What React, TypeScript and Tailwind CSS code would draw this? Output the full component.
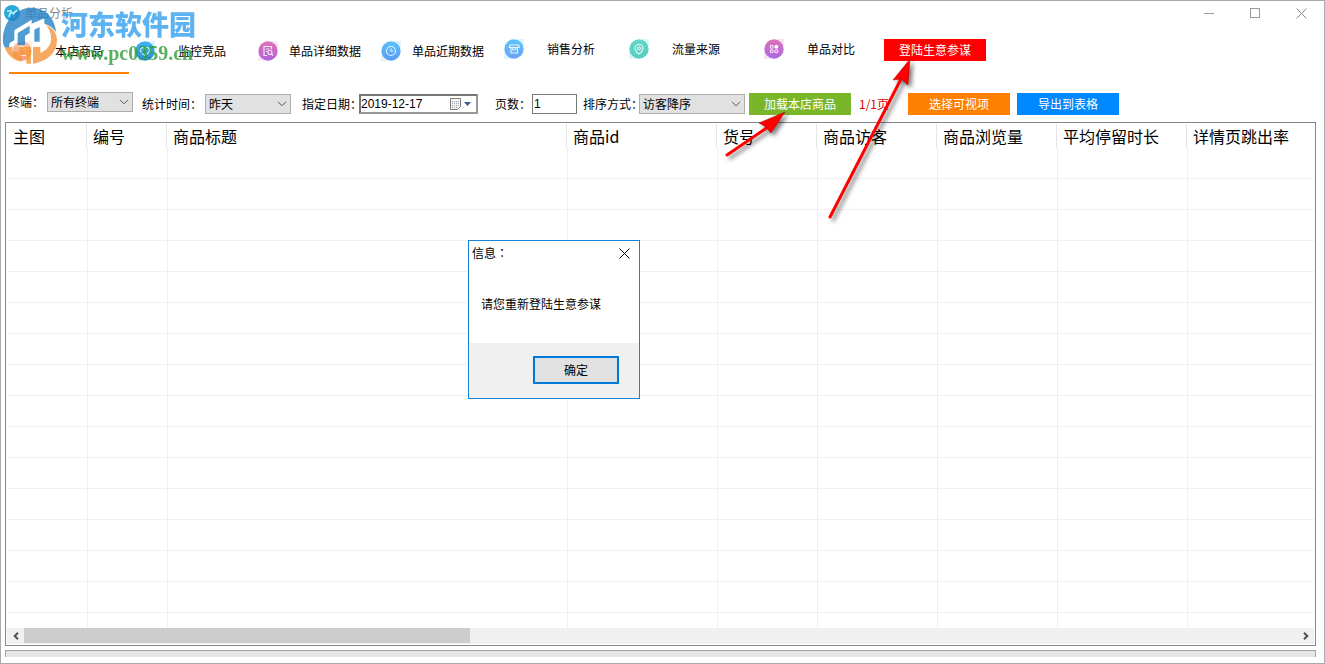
import { FC, ReactNode } from "react";

interface ITab {
  label: string;
  from: string;
  to: string;
  tint: string;
  glyph: ReactNode;
  className: string;
}

const tabs: ITab[] = [
  {
    label: "本店商品",
    from: "#fbc4a6",
    to: "#f79a80",
    tint: "#fdeee6",
    glyph: <path d="M7 6h4.5L13.500 8v6.500H7z" />,
    className: "h-[44px] border-b-2 border-[#ff8000]",
  },
  {
    label: "监控竞品",
    from: "#3fb4f4",
    to: "#2492d4",
    tint: "#e3f4fd",
    glyph: <path d="M10 14.500C6.500 12.500 5.500 11 5.500 9a2.300 2.300 0 0 1 4.500-.8A2.300 2.300 0 0 1 14.500 9c0 2-1 3.500-4.500 5.500z" />,
    className: "h-[44px] border-b-2 border-transparent",
  },
  {
    label: "单品详细数据",
    from: "#e070b4",
    to: "#b062e0",
    tint: "#f9e6f6",
    glyph: (
      <>
        <path d="M9 14.500H6v-9h7.500v3M8 8h3.500M8 10.500h1.500" />
        <circle cx="12" cy="11.500" r="2" />
        <path d="m13.500 13 1.700 1.700" />
      </>
    ),
    className: "h-[44px] border-b-2 border-transparent",
  },
  {
    label: "单品近期数据",
    from: "#5cc0f8",
    to: "#5a9cf4",
    tint: "#dff4fd",
    glyph: (
      <>
        <circle cx="10" cy="10" r="4.500" />
        <path d="M10 7.500V10h2.200" />
      </>
    ),
    className: "h-[44px] border-b-2 border-transparent",
  },
  {
    label: "销售分析",
    from: "#5cc4f8",
    to: "#6aa2f8",
    tint: "#dff4fd",
    glyph: <path d="M6 6h8.500l.7 2.500H5.300zM7 8.500v5.500h6.500V8.500M8.700 9v1.700h3V9" />,
    className: "h-[38px]",
  },
  {
    label: "流量来源",
    from: "#62d8c8",
    to: "#58ccc0",
    tint: "#e0f7f3",
    glyph: (
      <>
        <path d="M10 15.200C7.500 13 6 11.200 6 9.200a4 4 0 0 1 8 0c0 2-1.500 3.800-4 6z" />
        <circle cx="10" cy="9.300" r="1.500" />
      </>
    ),
    className: "h-[38px] ml-0.5",
  },
  {
    label: "单品对比",
    from: "#e070b8",
    to: "#a868e4",
    tint: "#f7e2f6",
    glyph: (
      <>
        <circle cx="7.700" cy="7.700" r="1.500" />
        <circle cx="12.300" cy="7.700" r="1.500" fill="white" />
        <circle cx="7.700" cy="12.300" r="1.500" />
        <circle cx="12.300" cy="12.300" r="1.500" />
      </>
    ),
    className: "h-[38px] ml-3",
  },
];

const columns = [
  { title: "主图", width: "w-[80px]" },
  { title: "编号", width: "w-[80px]" },
  { title: "商品标题", width: "w-[400px]" },
  { title: "商品id", width: "w-[150px]" },
  { title: "货号", width: "w-[100px]" },
  { title: "商品访客", width: "w-[120px]" },
  { title: "商品浏览量", width: "w-[120px]" },
  { title: "平均停留时长", width: "w-[130px]" },
  { title: "详情页跳出率", width: "" },
];

const rows = Array.from({ length: 16 }, (_, i) => i);

const TabIcon: FC<{ tab: ITab; id: string }> = ({ tab, id }) => (
  <svg className="size-5 shrink-0" viewBox="0 0 20 20" fill="none" aria-hidden="true">
    <defs>
      <linearGradient id={id} x1="0" y1="0" x2="0" y2="1">
        <stop offset="0" stopColor={tab.from} />
        <stop offset="1" stopColor={tab.to} />
      </linearGradient>
    </defs>
    <path d="M12 0h8v8zM0 13v7h7z" fill={tab.tint} />
    <circle cx="10" cy="10" r="9.700" fill={`url(#${id})`} />
    <g stroke="white" strokeOpacity="0.85" strokeWidth="1.100">
      {tab.glyph}
    </g>
  </svg>
);

interface ISelectProps {
  id: string;
  label: string;
  labelWidth: string;
  width: string;
  options: string[];
}

const SelectField: FC<ISelectProps> = ({ id, label, labelWidth, width, options }) => (
  <div className="flex items-center">
    <label htmlFor={id} className={`${labelWidth} shrink-0`}>
      {label}
    </label>
    <div className={`relative ${width}`}>
      <select
        id={id}
        className="block h-5 w-full appearance-none border border-[#adadad] bg-[#e1e1e1] pl-[3px] leading-4 outline-none"
      >
        {options.map((option) => (
          <option key={option}>{option}</option>
        ))}
      </select>
      <svg
        className="pointer-events-none absolute top-[7px] right-1 h-1.5 w-2.5"
        viewBox="0 0 10 6"
        fill="none"
        stroke="#555"
        aria-hidden="true"
      >
        <path d="m1 .8 4 4 4-4" />
      </svg>
    </div>
  </div>
);

const Watermark = () => (
  <div className="pointer-events-none absolute top-1 left-0 flex opacity-80">
    <svg className="h-[60px] w-[60px]" viewBox="0 0 180 180" aria-hidden="true">
      {/* blue upper half of the disc */}
      <path
        d="M6 112C2 52 44 8 92 8c40 0 68 28 74 74-10-14-22-22-36-26V40L92 56V44L40 76v30l-14 8c-2 8-2 16 2 26-12-6-20-14-22-28z"
        fill="#2483c8"
      />
      <path d="M50 84 86 62v22l-14 8v28H50z" fill="#2483c8" />
      {/* orange lower half */}
      <path
        d="M134 60c22 8 34 24 34 46 0 38-30 64-72 70v-50h22v18c22-10 34-26 32-48-1-14-6-26-16-36z"
        fill="#f5963a"
      />
      <path d="M12 126c8 2 14 2 22-2v16h18v-14h38v50h-14v-26H62v20C34 164 16 148 12 126z" fill="#f5963a" />
      <path d="M100 74l16-8v44h-16z" fill="#2483c8" />
    </svg>
    <div className="flex flex-col whitespace-nowrap">
      <span className="text-[27px] leading-[38px] font-black text-[#35a0f0]">河东软件园</span>
      <span className="font-['Liberation_Serif'] text-[20px] leading-5 font-bold text-[#2f9e38]">
        www.pc0359.cn
      </span>
    </div>
  </div>
);

const Arrows = () => (
  <svg
    className="pointer-events-none absolute top-[49px] left-[714px] h-[180px] w-[210px] drop-shadow-[3px_3px_2px_rgba(0,0,0,0.5)]"
    viewBox="715 50 210 180"
    fill="#f00"
    stroke="#f00"
    aria-hidden="true"
  >
    <path d="M727 155 768 127M830 217 901 79" strokeWidth="3" strokeLinecap="round" />
    <path d="M785 112 759 123 766 127 771 133z" stroke="#a00" strokeWidth="0.500" />
    <path d="M910 59 893 80 901 79 908 85z" stroke="#a00" strokeWidth="0.500" />
  </svg>
);

const MessageDialog = () => (
  <section
    role="dialog"
    aria-label="信息"
    className="absolute top-[239px] left-[467px] flex w-[172px] flex-col border border-[#1883d7] bg-white"
  >
    <header className="flex h-6 items-center justify-between pl-[3px]">
      <h2 className="font-['Noto_Sans_CJK_TC',sans-serif]">信息：</h2>
      <button type="button" aria-label="关闭" className="flex h-6 w-[30px] items-center justify-center">
        <svg className="size-[11px]" viewBox="0 0 11 11" stroke="black" aria-hidden="true">
          <path d="m.5.5 10 10m0-10-10 10" />
        </svg>
      </button>
    </header>
    <p className="flex h-[78px] items-center pl-3">请您重新登陆生意参谋</p>
    <footer className="flex h-[55px] items-center justify-end bg-[#f0f0f0] pr-5 pb-0.5">
      <button type="button" className="h-7 w-[86px] border-2 border-[#0078d7] bg-[#e1e1e1]">
        确定
      </button>
    </footer>
  </section>
);

function App() {
  return (
    <div className="relative flex h-screen flex-col overflow-hidden border border-[#aaa] bg-white font-['Noto_Sans_CJK_SC',sans-serif] text-[12px] leading-4 text-black">
      <header className="flex h-6 shrink-0 items-center">
        <svg className="ml-[3px] size-4" viewBox="0 0 16 16" aria-hidden="true">
          <circle cx="8" cy="8" r="8" fill="#29a9d8" />
          <path d="M3 6h4v2h3l3-3M6 8l-1 4M10 8v5" stroke="#c8f0fa" strokeWidth="1.500" fill="none" />
        </svg>
        <h1 className="ml-[5px] flex-1 text-[#888]">单品分析</h1>
        <button type="button" aria-label="最小化" className="flex h-6 w-[46px] items-center justify-center">
          <span className="h-px w-2.5 bg-[#999]" />
        </button>
        <button type="button" aria-label="最大化" className="flex h-6 w-[46px] items-center justify-center">
          <span className="size-2.5 border border-[#999]" />
        </button>
        <button type="button" aria-label="关闭窗口" className="flex h-6 w-[46px] items-center justify-center">
          <svg className="size-[11px]" viewBox="0 0 11 11" stroke="#888" aria-hidden="true">
            <path d="m.5.5 10 10m0-10-10 10" />
          </svg>
        </button>
      </header>

      <nav className="flex shrink-0 items-start gap-[3px] pt-[5px] pl-2 whitespace-nowrap">
        {tabs.map((tab, i) => (
          <button
            key={tab.label}
            type="button"
            className={`flex w-[120px] items-center px-[3px] ${tab.className}`}
          >
            <TabIcon tab={tab} id={`tab-${i}`} />
            <span className="flex-1 text-center">{tab.label}</span>
          </button>
        ))}
        <button type="button" className="mt-[9px] h-[22px] w-[102px] bg-[#f00] text-white">
          登陆生意参谋
        </button>
      </nav>

      <form className="flex shrink-0 items-center pt-[18px] pb-[6px] pl-[7px] whitespace-nowrap">
        <div className="flex h-6 items-center">
          <div className="pb-1">
            <SelectField id="terminal" label="终端：" labelWidth="w-[39px]" width="w-[86px]" options={["所有终端"]} />
          </div>
          <div className="ml-[9px]">
            <SelectField id="period" label="统计时间：" labelWidth="w-[63px]" width="w-[86px]" options={["昨天"]} />
          </div>
          <div className="ml-[11px] flex items-center">
            <label htmlFor="date" className="w-[57px] shrink-0">
              指定日期：
            </label>
            <div className="flex h-5 w-[119px] items-center border-2 border-[#777] border-r-[#999] border-b-[#999]">
              <input
                id="date"
                defaultValue="2019-12-17"
                className="w-0 flex-1 font-['Liberation_Sans'] outline-none"
              />
              <button type="button" aria-label="选择日期" className="mr-[5px] flex items-center gap-0.5">
                <svg className="h-3 w-3" viewBox="0 0 12 12" fill="none" aria-hidden="true">
                  <path d="M.5.5h10v8l-3 3h-7z" fill="#f6f6f6" stroke="#857772" />
                  <path d="M2 3.500h7M2 5.500h7M2 7.500h7M2 9.500h5" stroke="#9aa8b8" strokeDasharray="1 1" />
                </svg>
                <svg className="h-1 w-[7px]" viewBox="0 0 7 4" aria-hidden="true">
                  <path d="M0 0h7L3.500 4z" fill="#3d5a8c" />
                </svg>
              </button>
            </div>
          </div>
          <div className="ml-[17px] flex items-center">
            <label htmlFor="pages" className="w-[37px] shrink-0">
              页数：
            </label>
            <input
              id="pages"
              defaultValue="1"
              className="h-5 w-[45px] border border-[#7a7a7a] pl-px font-['Liberation_Sans'] outline-none"
            />
          </div>
          <div className="ml-[6px]">
            <SelectField id="sort" label="排序方式：" labelWidth="w-[56px]" width="w-[106px]" options={["访客降序"]} />
          </div>
        </div>
        <button type="button" className="ml-1 h-[22px] w-[102px] bg-[#7ab62a] text-white">
          加载本店商品
        </button>
        <span className="ml-2 w-[49px] text-[#e00000]">1/1页</span>
        <button type="button" className="h-[22px] w-[102px] bg-[#ff8000] text-white">
          选择可视项
        </button>
        <button type="button" className="ml-[7px] h-[22px] w-[102px] bg-[#0088ff] text-white">
          导出到表格
        </button>
      </form>

      <main className="mr-2 ml-1 flex min-h-0 flex-1 flex-col border border-[#828790] p-px">
        <div className="min-h-0 flex-1 overflow-hidden">
          <table className="w-full table-fixed border-separate border-spacing-0">
            <colgroup>
              {columns.map((column) => (
                <col key={column.title} className={column.width} />
              ))}
            </colgroup>
            <thead>
              <tr>
                {columns.map((column) => (
                  <th
                    key={column.title}
                    className="h-6 border-r border-[#e5e5e5] p-0 pl-1.5 text-left text-base leading-6 font-normal whitespace-nowrap last:border-r-0"
                  >
                    {column.title}
                  </th>
                ))}
              </tr>
            </thead>
            <tbody>
              {rows.map((row) => (
                <tr key={row}>
                  {columns.map((column) => (
                    <td
                      key={column.title}
                      className="h-[31px] border-b border-l border-[#f0f0f0] p-0 first:border-l-0"
                    />
                  ))}
                </tr>
              ))}
            </tbody>
          </table>
        </div>
        <div className="flex h-4 shrink-0 bg-[#f0f0f0]">
          <button type="button" aria-label="向左滚动" className="flex w-[17px] items-center justify-center">
            <svg className="h-2 w-1.5" viewBox="0 0 6 8" fill="none" stroke="#505050" strokeWidth="2" aria-hidden="true">
              <path d="M5 .7 1.700 4 5 7.300" />
            </svg>
          </button>
          <div className="flex-1">
            <div className="h-[15px] w-[35%] bg-[#cdcdcd]" />
          </div>
          <button type="button" aria-label="向右滚动" className="flex w-[17px] items-center justify-center">
            <svg className="h-2 w-1.5" viewBox="0 0 6 8" fill="none" stroke="#505050" strokeWidth="2" aria-hidden="true">
              <path d="M1 .7 4.300 4 1 7.300" />
            </svg>
          </button>
        </div>
      </main>
      <footer className="mt-1 mr-2 mb-1.5 ml-1 h-[7px] shrink-0 border-x border-t border-[#a0a0a0] bg-[#e6e6e6]" />

      <MessageDialog />
      <Watermark />
      <Arrows />
    </div>
  );
}

export default App;
